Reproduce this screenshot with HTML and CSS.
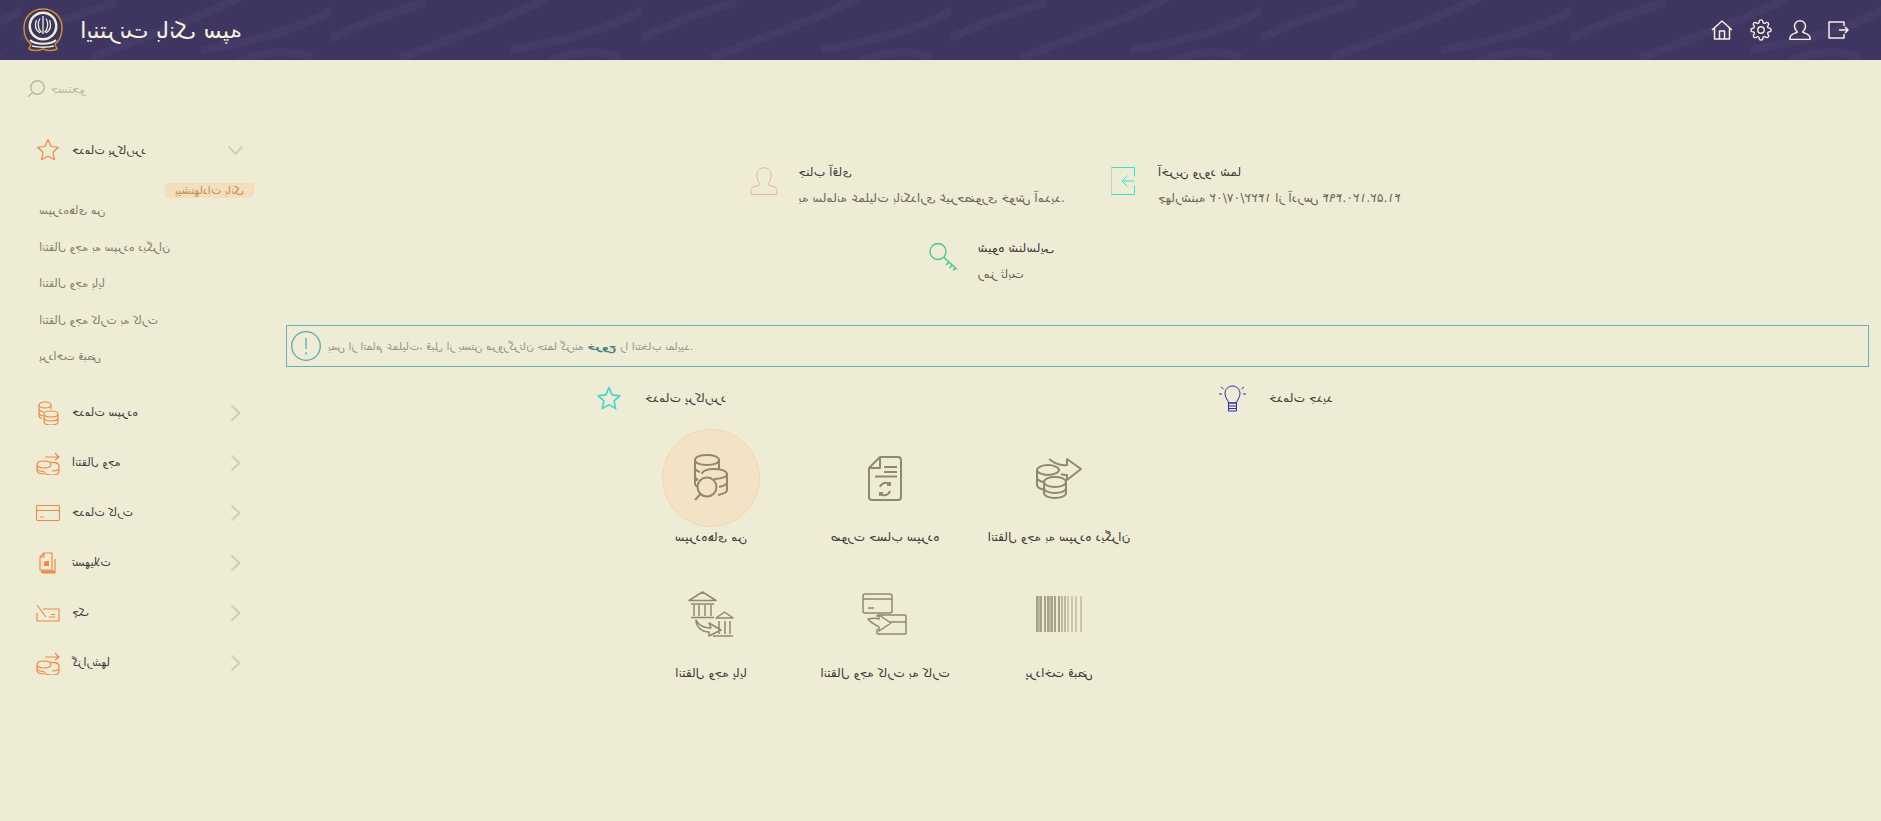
FILE: index.html
```html
<!DOCTYPE html>
<html lang="fa" dir="rtl">
<head>
  <meta charset="UTF-8" />
  <title>اینترنت بانک سپه</title>
  <link rel="stylesheet" href="styles.css">
</head>
<body>
<svg class="defs" width="0" height="0">
  <symbol id="star" viewBox="0 0 24 24"><path d="M12 1.500l3 7 7.500.8-5.600 5 1.600 7.400-6.500-3.800-6.500 3.800 1.600-7.400-5.600-5 7.500-.8z"/></symbol>
  <symbol id="coins-send" viewBox="0 0 24 24"><path d="M9 6h14M19 2l4 4-4 3M1 13.500c0-2 3-3.500 7-3.500s7 1.500 7 3.500-3 3.500-7 3.500-7-1.500-7-3.500zM1 13.500v6c0 2 3 3.500 7 3.500M1 17c0 2 3 3.500 7 3.500M14 11.500c4-.5 9 .5 9 3v6c0 2-3 3.500-7 3.500-4 0-8-1-8-3.500M23 17c0 2-3 3-7 3"/></symbol>
</svg>
<div class="page">
  <header class="topbar">
    <svg class="swoosh" width="1881" height="60" viewBox="0 0 1881 60" preserveAspectRatio="none">
      <defs>
        <pattern id="calli" width="310" height="60" patternUnits="userSpaceOnUse">
          <path d="M-10 6C30 28 70 40 130 50M90 -4C130 18 170 30 240 58M215 2C245 12 280 22 322 44M20 58C40 50 70 50 96 64"/>
        </pattern>
      </defs>
      <rect width="1881" height="60" fill="url(#calli)"/>
    </svg>
    <div class="brand">
      <svg class="ico logo" width="40" height="44" viewBox="0 0 40 44">
        <path d="M20 1C31 1 39 9 39 20c0 8-3 13-7 16l2 5c-4 2-9 2-14 0-5 2-10 2-14 0l2-5C4 33 1 28 1 20 1 9 9 1 20 1z" fill="#3a345e" stroke="#d08a36" stroke-width="1.500"/>
        <circle cx="20" cy="18" r="14.500" fill="#f0edd8"/>
        <circle cx="20" cy="18" r="12" fill="#3a345e"/>
        <path d="M20 8v18M17 10.500c-2.500 4-2.500 10 1.500 14M23 10.500c2.500 4 2.500 10-1.500 14M13.500 12c-2 5-1 10 3.500 13M26.500 12c2 5 1 10-3.500 13" fill="none" stroke="#f0edd8" stroke-width="1.300"/>
        <path d="M7 32c5 5 21 5 26 0M9 38c6 1.500 16 1.500 22 0" fill="none" stroke="#f0edd8" stroke-width="1.800"/>
      </svg>
      <span class="brand-name">اینترنت بانک سپه</span>
    </div>
    <nav class="tools">
      <svg class="ico" width="22" height="20" viewBox="0 0 22 20"><path d="M1 10L11 1l10 9M3.500 8v11h15V8M8.500 19v-8h5v8"/></svg>
      <svg class="ico" width="22" height="22" viewBox="0 0 24 24"><circle cx="12" cy="12" r="3.500"/><path d="M19.400 15a1.650 1.650 0 0 0 .33 1.820l.06.06a2 2 0 0 1 0 2.830 2 2 0 0 1-2.830 0l-.06-.06a1.650 1.650 0 0 0-1.820-.33 1.650 1.650 0 0 0-1 1.510V21a2 2 0 0 1-2 2 2 2 0 0 1-2-2v-.09A1.650 1.650 0 0 0 9 19.400a1.650 1.650 0 0 0-1.820.33l-.06.06a2 2 0 0 1-2.830 0 2 2 0 0 1 0-2.830l.06-.06a1.650 1.650 0 0 0 .33-1.820 1.650 1.650 0 0 0-1.510-1H3a2 2 0 0 1-2-2 2 2 0 0 1 2-2h.09A1.650 1.650 0 0 0 4.600 9a1.650 1.650 0 0 0-.33-1.820l-.06-.06a2 2 0 0 1 0-2.830 2 2 0 0 1 2.830 0l.06.06a1.650 1.650 0 0 0 1.820.33H9a1.650 1.650 0 0 0 1-1.510V3a2 2 0 0 1 2-2 2 2 0 0 1 2 2v.09a1.650 1.650 0 0 0 1 1.510 1.650 1.650 0 0 0 1.820-.33l.06-.06a2 2 0 0 1 2.830 0 2 2 0 0 1 0 2.830l-.06.06a1.650 1.650 0 0 0-.33 1.820V9a1.650 1.650 0 0 0 1.510 1H21a2 2 0 0 1 2 2 2 2 0 0 1-2 2h-.09a1.650 1.650 0 0 0-1.510 1z"/></svg>
      <svg class="ico" width="22" height="20" viewBox="0 0 22 20"><path d="M1 19.500v-2c0-2.500 3-3.500 6.500-5 1-.5 1-.5 0-1.500C6 9.500 5.500 7.500 5.500 6 5.500 3 8 .8 11 .8S16.500 3 16.500 6c0 1.500-.5 3.500-2 5-1 1-1 1 0 1.500 3.500 1.500 6.500 2.500 6.500 5v2z"/></svg>
      <svg class="ico" width="21" height="18" viewBox="0 0 21 18"><path d="M16 5V1H1v16h15v-4M11 9h9M17 6l3 3-3 3"/></svg>
    </nav>
  </header>

  <div class="layout">
    <aside class="sidebar">
      <div class="search">
        <svg class="ico" width="18" height="18" viewBox="0 0 18 18"><circle cx="10.500" cy="7.500" r="6.800"/><path d="M5.500 12.500L1 17"/></svg>
        <span>جستجو</span>
      </div>

      <div class="menu-head">
        <svg class="ico menu-ico" width="24" height="24"><use href="#star"/></svg>
        <span class="menu-label">خدمات پرکاربرد</span>
        <svg class="ico chev" width="15" height="9" viewBox="0 0 15 9"><path d="M.5 .5l7 7.500 7-7.500"/></svg>
      </div>
      <div class="badge-row"><span class="badge">پیشنهادات بانک</span></div>
      <ul class="sub-menu">
        <li>سپرده‌های من</li>
        <li>انتقال وجه به سپرده دیگران</li>
        <li>انتقال وجه پایا</li>
        <li>انتقال وجه کارت به کارت</li>
        <li>پرداخت قبض</li>
      </ul>

      <div class="menu-head">
        <svg class="ico menu-ico" width="24" height="24" viewBox="0 0 24 24"><path d="M3 4c0-2 3-3 6-3s6 1 6 3-3 3-6 3-6-1-6-3zM3 4v11c0 1 1 2 3 2.500M3 8c0 1.500 2 2.500 5 3M3 12c0 1.500 2 2.500 4 3M15 4v4M8 13c0-2 3-3 7-3s7 1 7 3-3 3-7 3-7-1-7-3zM8 13v8c0 2 3 3 7 3s7-1 7-3v-8M8 17c0 2 3 3 7 3s7-1 7-3"/></svg>
        <span class="menu-label">خدمات سپرده</span>
        <svg class="ico chev-side" width="9" height="16" viewBox="0 0 9 16"><path d="M.5 .5l8 7.500-8 7.500"/></svg>
      </div>
      <div class="menu-head">
        <svg class="ico menu-ico" width="24" height="24"><use href="#coins-send"/></svg>
        <span class="menu-label">انتقال وجه</span>
        <svg class="ico chev-side" width="9" height="16" viewBox="0 0 9 16"><path d="M.5 .5l8 7.500-8 7.500"/></svg>
      </div>
      <div class="menu-head">
        <svg class="ico menu-ico" width="24" height="16" viewBox="0 0 24 16"><rect x=".5" y=".5" width="23" height="15" rx="1.500"/><path d="M.5 5.500h23M4 12h4"/></svg>
        <span class="menu-label">خدمات کارت</span>
        <svg class="ico chev-side" width="9" height="16" viewBox="0 0 9 16"><path d="M.5 .5l8 7.500-8 7.500"/></svg>
      </div>
      <div class="menu-head">
        <svg class="ico menu-ico" width="24" height="22" viewBox="0 0 24 22"><path d="M8 1h8v17H4V5zM8 1v4H4M19 7v14H7"/><path class="solid" d="M9 9h4v5H8v-3zM5 18.500h14V21H5z"/></svg>
        <span class="menu-label">تسهیلات</span>
        <svg class="ico chev-side" width="9" height="16" viewBox="0 0 9 16"><path d="M.5 .5l8 7.500-8 7.500"/></svg>
      </div>
      <div class="menu-head">
        <svg class="ico menu-ico" width="24" height="18" viewBox="0 0 24 18"><path d="M7 5h16v12H1V9"/><path d="M1 1l9 12M13 13h6M15 10.500h4"/></svg>
        <span class="menu-label">چک</span>
        <svg class="ico chev-side" width="9" height="16" viewBox="0 0 9 16"><path d="M.5 .5l8 7.500-8 7.500"/></svg>
      </div>
      <div class="menu-head">
        <svg class="ico menu-ico" width="24" height="24"><use href="#coins-send"/></svg>
        <span class="menu-label">گزارشها</span>
        <svg class="ico chev-side" width="9" height="16" viewBox="0 0 9 16"><path d="M.5 .5l8 7.500-8 7.500"/></svg>
      </div>
    </aside>

    <main class="content">
      <section class="info-row">
        <div class="info-card user-card">
          <svg class="ico info-ico" width="28" height="28" viewBox="0 0 28 28"><path class="pink" d="M1 27.500v-4c0-3 3-4 7-5 2-.7 2-1.500 1-3C7.500 13.500 7 10 7 8 7 3.500 10 .8 14 .8S21 3.500 21 8c0 2-.5 5.500-2 7.500-1 1.500-1 2.300 1 3 4 1 7 2 7 5v4z"/></svg>
          <div>
            <div class="info-title">جناب آقای</div>
            <div class="info-text">به سامانه عملیات بانکداری غیرحضوری خوش آمدید.</div>
          </div>
        </div>
        <div class="info-card login-card">
          <svg class="ico info-ico" width="24" height="28" viewBox="0 0 24 28"><path class="pale" d="M.5 .5v27"/><path class="aqua" d="M.5 .5h23v9M.5 27.500h23v-9M23.500 14H11.500M16.500 8.500L11 14l5.500 5.500"/></svg>
          <div>
            <div class="info-title">آخرین ورود شما</div>
            <div class="info-text">چهارشنبه <bdi>۱۴۲۲/۰۷/۰۲</bdi> از آدرس <bdi>۴۱.۵۲.۱۲۰.۴۹۴</bdi></div>
          </div>
        </div>
      </section>
      <section class="info-row key-row">
        <div class="info-card key-card">
          <svg class="ico info-ico" width="29" height="28" viewBox="0 0 29 28"><circle class="mint" cx="9" cy="8.500" r="8"/><path class="mint" d="M15 14.500L28 26.500M20 19l-3 3M23.500 22l-3 3M26.500 25l-2.500 2.500"/></svg>
          <div>
            <div class="info-title">شیوه شناسایی</div>
            <div class="info-text">رمز ثابت</div>
          </div>
        </div>
      </section>

      <div class="alert">
        <svg class="ico" width="30" height="30" viewBox="0 0 30 30"><circle cx="15" cy="15" r="14.300"/><path d="M15 7v11M15 21v2.500"/></svg>
        <p>پس از اتمام عملیات، قبل از بستن مرورگرتان حتما گزینه <b>خروج</b> را انتخاب نمایید.</p>
      </div>

      <div class="section-heads">
        <div class="section-head">
          <svg class="ico teal-star" width="26" height="25"><use href="#star"/></svg>
          <span>خدمات پرکاربرد</span>
        </div>
        <div class="section-head new-head">
          <svg class="ico bulb" width="29" height="28" viewBox="0 0 29 28"><path d="M10.500 19c0-3-3.500-4.500-3.500-9.500C7 5.500 10 2 14.500 2S22 5.500 22 9.500c0 5-3.500 6.500-3.500 9.500zM10.500 19h8v8h-8zM10.500 22h8M10.500 24.500h8M3 3l2.500 2M1 10h3M26 3l-2.500 2M28 10h-3"/></svg>
          <span>خدمات جدید</span>
        </div>
      </div>

      <div class="services">
        <div class="service">
          <div class="service-ico active">
            <svg class="ico" width="36" height="48" viewBox="0 0 36 48"><path d="M2 6c0-3 5-5 12-5s12 2 12 5-5 5-12 5S2 9 2 6zM2 6v24c0 1 1 2 3 3M2 14c0 2 2 3 5 4M2 22c0 2 1 3 3 4M26 6v10M9 20c0-3 5-5 12-5s13 2 13 5-6 5-13 5M34 20v16c0 2-4 4-9 5M34 28c0 2-3 4-8 5"/><circle class="lens" cx="14" cy="33" r="9.500"/><path d="M7.500 40L2 46"/></svg>
          </div>
          <span>سپرده‌های من</span>
        </div>
        <div class="service">
          <div class="service-ico">
            <svg class="ico" width="34" height="45" viewBox="0 0 34 45"><path d="M12 1h18a3 3 0 0 1 3 3v37a3 3 0 0 1-3 3H4a3 3 0 0 1-3-3V12zM12 1v11H1M16 11h13M16 16h13M7 20.500h22"/><path d="M12 31a6 6 0 0 1 10-2.500M22 26v3h-3M22 35a6 6 0 0 1-10 2.500M12 40v-3h3"/></svg>
          </div>
          <span>صورت حساب سپرده</span>
        </div>
        <div class="service">
          <div class="service-ico">
            <svg class="ico" width="46" height="41" viewBox="0 0 46 41"><path d="M13 1c5 4 11 7 18 6V1l14 10-14 11v-5c-2 0-4 0-6-1"/><path class="fill-bg" d="M1 12c0-2.500 5-5 11-5s11 2.500 11 5-5 5-11 5-11-2.500-11-5zM1 12v15c0 2 3 4 7 4.500M1 19.500c0 2 3 4 7 4.500"/><path class="fill-bg" d="M8 24c0-3 5-5 11-5s11 2 11 5v11c0 3-5 5-11 5s-11-2-11-5zM8 24c0 3 5 5 11 5s11-2 11-5M8 30c0 3 5 5 11 5s11-2 11-5"/></svg>
          </div>
          <span>انتقال وجه به سپرده دیگران</span>
        </div>
        <div class="service">
          <div class="service-ico">
            <svg class="ico thin" width="46" height="46" viewBox="0 0 46 46"><path d="M1 9.500L14.500 1 28 9.500zM3 13h23M6 14v11M11 14v11M17 14v11M23 14v11M3 26.500h23M28 27l8.500-6L45 27zM31 30v13M37 30v13M42 30v13M25 45h20M8 29c3 6 9 8 15 8l-2-5 12 7-12 6v-4C14 41 8 36 8 29z"/></svg>
          </div>
          <span>انتقال وجه پایا</span>
        </div>
        <div class="service">
          <div class="service-ico">
            <svg class="ico thin" width="45" height="42" viewBox="0 0 45 42"><rect x="1" y="1" width="29" height="19" rx="2"/><path d="M1 6h29M6 15h6"/><path d="M15 24v-1a1 1 0 0 1 1-1h27a1 1 0 0 1 1 1v17a1 1 0 0 1-1 1H16a1 1 0 0 1-1-1v-4M27 29h17M6 26c4-1 7-1 11 0v-4l12 8-12 8v-4c-3-2-8-4-11-8z"/></svg>
          </div>
          <span>انتقال وجه کارت به کارت</span>
        </div>
        <div class="service">
          <div class="service-ico">
            <svg class="ico barcode" width="46" height="36" viewBox="0 0 46 36"><path d="M1 0v36M5 0v36M9 0v36M12 0v36M16 0v36M19 0v36M23 0v36"/><path class="bar-mid" d="M3 0v36M14 0v36M26 0v36M29 0v36"/><path class="bar-pale" d="M32 0v36M36 0v36M40 0v36M45 0v36"/></svg>
          </div>
          <span>پرداخت قبض</span>
        </div>
      </div>
    </main>
  </div>
</div>
</body>
</html>
```

FILE: styles.css
```css
html, body {
  margin: 0;
  height: 100%;
  overflow: hidden;
  background: #efecd6;
}
body {
  font-family: 'DejaVu Sans', 'Noto Sans', sans-serif;
  font-size: 11px;
  color: #403e3c;
}
.defs {
  position: absolute;
}
/* the capture is a mirror image of the rtl page */
.page {
  width: 1881px;
  height: 821px;
  overflow: hidden;
  background: #efecd6;
  transform: scaleX(-1);
}
.ico {
  display: block;
  flex: none;
  fill: none;
  stroke: currentColor;
  stroke-width: 1;
  stroke-linejoin: round;
  transform: scaleX(-1);
}

/* header */
.topbar {
  position: relative;
  display: flex;
  align-items: center;
  justify-content: space-between;
  height: 60px;
  padding-inline: 23px 32px;
  background: #3e3660;
  color: #f4f2de;
}
.swoosh {
  position: absolute;
  inset: 0;
}
.swoosh path {
  fill: none;
  stroke: #443c66;
  stroke-width: 8;
}
.brand, .tools {
  position: relative;
  display: flex;
  align-items: center;
}
.brand {
  gap: 17px;
}
.logo {
  stroke: none;
}
.brand-name {
  font-size: 23px;
}
.tools {
  gap: 17px;
}
.tools .ico {
  stroke-width: 1.500;
}

.layout {
  display: flex;
  height: 761px;
}

/* side menu */
.sidebar {
  flex: none;
  width: 243px;
}
.search {
  display: flex;
  align-items: center;
  gap: 6px;
  height: 18px;
  padding-top: 20px;
  padding-inline-start: 27px;
  margin-bottom: 27px;
  color: #bcb9a4;
  font-size: 11.500px;
}
.search .ico {
  stroke-width: 1.500;
}
.menu-head {
  display: flex;
  align-items: center;
  height: 50px;
  padding-inline-start: 36px;
  box-sizing: border-box;
  font-size: 11.200px;
}
.menu-ico {
  margin-inline-end: 12px;
  color: #ee8a45;
  stroke-width: 1.200;
}
.solid {
  fill: #ee8a45;
  stroke: none;
}
.menu-label {
  flex: 1;
}
.chev {
  color: #cfccb8;
  stroke-width: 1.800;
}
.chev-side {
  color: #cfccb8;
  stroke-width: 2;
  margin-inline-end: 3px;
}
.badge-row {
  display: flex;
  justify-content: flex-end;
  margin-top: 8px;
  margin-inline-end: -11px;
}
.badge {
  width: 89px;
  height: 15px;
  line-height: 15px;
  text-align: center;
  font-size: 11px;
  color: #cc8d4e;
  background: #f2dfbd;
  border-end-end-radius: 6px;
}
.sub-menu {
  list-style: none;
  margin: -5px 0 12px;
  padding: 0;
  padding-inline-start: 39px;
  color: #857f6c;
  font-size: 11.300px;
}
.sub-menu li {
  height: 36.600px;
  line-height: 36.600px;
}

/* main area */
.content {
  flex: 1;
  min-width: 0;
  padding-top: 99px;
  padding-inline: 43px 12px;
}
.info-row {
  display: flex;
  justify-content: center;
  gap: 46px;
  padding-inline-end: 4px;
}
.key-row {
  margin-top: 24px;
}
.info-card {
  display: flex;
  align-items: flex-start;
  gap: 20px;
}
.login-card {
  gap: 23px;
}
.key-card {
  width: 292px;
  gap: 19px;
}
.info-ico {
  margin-top: 8px;
}
.info-title, .info-text {
  height: 26px;
  line-height: 26px;
  font-size: 12.400px;
  white-space: nowrap;
}
.info-text {
  color: #6c685a;
}
.pink {
  stroke: #f0aba3;
}
.pale {
  stroke: #bcd6c8;
}
.aqua {
  stroke: #2ce4d2;
}
.mint {
  stroke: #3cc48c;
  stroke-width: 1.300;
}

.alert {
  display: flex;
  align-items: center;
  gap: 7px;
  height: 42px;
  margin-top: 38px;
  padding-inline-start: 4px;
  box-sizing: border-box;
  border: 1px solid #6ab0ba;
  color: #5fa6b2;
}
.alert .ico {
  stroke-width: 1.300;
}
.alert p {
  margin: 0;
  font-size: 10.900px;
  color: #929a8c;
}
.alert b {
  color: #4d7f8a;
}

.section-heads {
  display: grid;
  grid-template-columns: 622px 1fr;
  height: 30px;
  margin-top: 16px;
  padding-inline-start: 310px;
  font-size: 12.300px;
}
.section-head {
  display: flex;
  align-items: center;
  gap: 23px;
}
.new-head {
  gap: 22px;
}
.teal-star {
  color: #38d8ca;
  stroke-width: 1.500;
}
.bulb {
  color: #2b2bb0;
}

.services {
  display: grid;
  grid-template-columns: repeat(3, 174px);
  row-gap: 18px;
  margin-top: 16px;
  margin-inline-start: 338px;
  font-size: 12.300px;
}
.service {
  display: flex;
  flex-direction: column;
  align-items: center;
  white-space: nowrap;
}
.service span {
  height: 20px;
  line-height: 20px;
}
.service-ico {
  display: flex;
  align-items: center;
  justify-content: center;
  width: 98px;
  height: 98px;
  box-sizing: border-box;
  border-radius: 50%;
  color: #8d8871;
}
.service-ico .ico {
  stroke-width: 2;
}
.service-ico .thin {
  stroke-width: 1.500;
}
.service-ico.active {
  background: #f3e3c4;
  border: 1px solid #f1d6ad;
}
.lens {
  fill: #f3e3c4;
}
.fill-bg {
  fill: #efecd6;
}
.service-ico .barcode {
  stroke-width: 1.500;
}
.bar-mid {
  stroke: #a8a690;
}
.bar-pale {
  stroke: #c4b8a2;
}
```
